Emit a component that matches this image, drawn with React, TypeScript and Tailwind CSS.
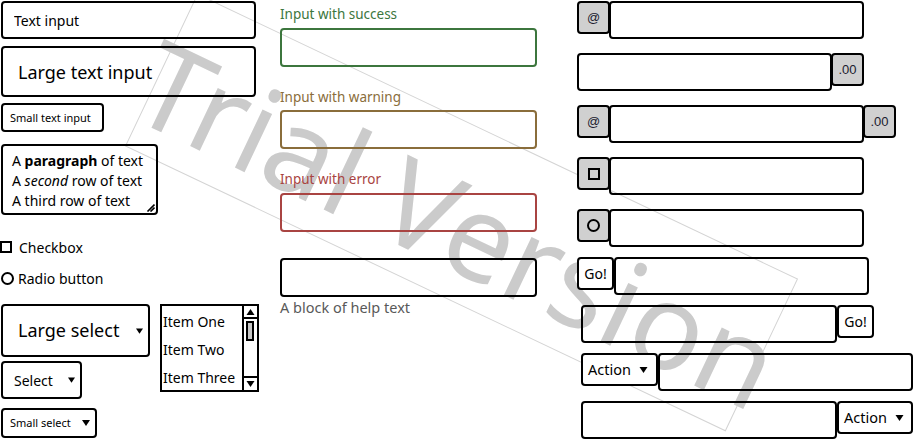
import React from "react";

const sans = { fontFamily: '"Noto Sans", "Segoe UI", sans-serif' };
const arial = { fontFamily: '"Liberation Sans", Arial, sans-serif' };

const Caret = ({ w = 8, h = 6 }: { w?: number; h?: number }) => (
  <svg width={w} height={h} viewBox="0 0 8 6" className="shrink-0">
    <path d="M0 0H8L4 6Z" fill="#000" />
  </svg>
);

const Addon = ({ children, right }: { children: React.ReactNode; right?: boolean }) => (
  <div
    className={
      "flex h-[33px] w-[33px] shrink-0 items-center justify-center rounded border-2 border-black bg-[#d0d0d0] text-[13px] text-[#1a1a2e] " +
      (right ? "-ml-px" : "-mr-px")
    }
    style={arial}
  >
    {children}
  </div>
);

const Field = ({ w = 255 }: { w?: number }) => (
  <input readOnly className="h-[38px] shrink-0 rounded border-2 border-black bg-transparent outline-none" style={{ width: w }} />
);

const GoButton = () => (
  <button className="flex h-[33px] w-[37px] shrink-0 items-center justify-center rounded border-2 border-black bg-white text-[14px]">
    Go!
  </button>
);

const ActionButton = ({ w }: { w: number }) => (
  <button
    className="flex h-[33px] shrink-0 items-center gap-[7px] rounded border-2 border-black bg-white pl-[5px] text-[14.5px]"
    style={{ width: w }}
  >
    Action
    <Caret w={11} h={6} />
  </button>
);

const SelectBox = ({
  label,
  cls,
  caret,
}: {
  label: string;
  cls: string;
  caret: number;
}) => (
  <div className={"flex items-center justify-between rounded border-2 border-black " + cls}>
    <span>{label}</span>
    <Caret w={caret} h={6} />
  </div>
);

const Watermark = () => (
  <div className="pointer-events-none absolute inset-0 -z-10 overflow-hidden">
    <div className="absolute left-[129px] top-[128px] flex h-[169px] w-[665px] rotate-[25.4deg] items-center justify-center overflow-visible border border-[#d4d4d4]">
      <span className="translate-x-[2px] translate-y-[10px] whitespace-nowrap text-[120px] leading-none text-[#cbcbcb]" style={sans}>
        Trial Version
      </span>
    </div>
  </div>
);

export default function App() {
  return (
    <div className="relative z-0 flex h-[440px] w-[915px] overflow-hidden bg-white text-black" style={sans}>
      <Watermark />

      {/* left column */}
      <div className="flex w-[280px] shrink-0 flex-col">
        <input
          readOnly
          value="Text input"
          className="ml-px mt-px h-[38px] w-[255px] rounded border-2 border-black bg-transparent pl-[11px] text-[14px] outline-none"
        />
        <input
          readOnly
          value="Large text input"
          className="ml-px mt-[7px] h-[51px] w-[255px] rounded border-2 border-black bg-transparent pl-[15px] text-[18px] outline-none"
        />
        <input
          readOnly
          value="Small text input"
          className="ml-px mt-[6px] h-[29px] w-[103px] rounded border-2 border-black bg-transparent pl-[7px] text-[11px] outline-none"
        />
        <div className="relative ml-px mt-[12px] h-[71px] w-[157px] rounded border-2 border-black pl-[9px] pt-[5px] text-[14px] leading-[20px]">
          <div>
            A <b>paragraph</b> of text
          </div>
          <div>
            A <i>second</i> row of text
          </div>
          <div>A third row of text</div>
          <svg width="9" height="9" viewBox="0 0 9 9" className="absolute bottom-px right-px">
            <path d="M8.5 1.5L1.5 8.5M8.5 4.5L4.5 8.5" stroke="#000" strokeWidth="1.6" />
          </svg>
        </div>
        <div className="mt-[22px] flex h-5 items-center gap-[7px] text-[14px]">
          <span className="h-3 w-3 border-2 border-black" />
          Checkbox
        </div>
        <div className="mt-[11px] flex h-5 items-center gap-[4px] pl-px text-[14px]">
          <span className="h-[13px] w-[13px] rounded-full border-2 border-black" />
          Radio button
        </div>
        <div className="mt-[16px] flex">
          <div className="flex flex-col">
            <SelectBox label="Large select" cls="ml-px h-[53px] w-[149px] pl-[15px] pr-[5px] text-[18px]" caret={7} />
            <SelectBox label="Select" cls="ml-px mt-[4px] h-[38px] w-[81px] pl-[11px] pr-[5px] text-[14px]" caret={7} />
            <SelectBox label="Small select" cls="ml-px mt-[9px] h-[30px] w-[96px] pl-[7px] pr-[5px] text-[11px]" caret={8} />
          </div>
          <div className="ml-[10px] flex h-[88px] w-[99px] border-2 border-black text-[14px]">
            <div className="flex-1 overflow-hidden pl-px pt-px">
              <div className="flex h-7 items-center">Item One</div>
              <div className="flex h-7 items-center">Item Two</div>
              <div className="flex h-7 items-center whitespace-nowrap">Item Three</div>
            </div>
            <div className="flex w-[15px] flex-col border-l-2 border-black">
              <div className="flex h-[13px] items-center justify-center border-b-2 border-black">
                <svg width="9" height="6" viewBox="0 0 8 6">
                  <path d="M0 6H8L4 0Z" fill="#000" />
                </svg>
              </div>
              <div className="flex-1">
                <div className="ml-[2px] mt-[2px] h-[20px] w-[8px] border-2 border-black bg-[#c8c8c8]" />
              </div>
              <div className="flex h-[14px] items-center justify-center border-t-2 border-black">
                <svg width="9" height="6" viewBox="0 0 8 6">
                  <path d="M0 0H8L4 6Z" fill="#000" />
                </svg>
              </div>
            </div>
          </div>
        </div>
      </div>

      {/* middle column */}
      <div className="flex w-[297px] shrink-0 flex-col">
        <div className="mt-[4px] flex h-5 items-center text-[13.5px] text-[#3c763d]">Input with success</div>
        <input readOnly className="mt-[4px] h-[39px] w-[257px] rounded border-2 border-[#3c763d] bg-transparent outline-none" />
        <div className="mt-[20px] flex h-5 items-center text-[13.5px] text-[#8a6d3b]">Input with warning</div>
        <input readOnly className="mt-[3px] h-[39px] w-[257px] rounded border-2 border-[#8a6d3b] bg-transparent outline-none" />
        <div className="mt-[20px] flex h-5 items-center text-[13.5px] text-[#a94442]">Input with error</div>
        <input readOnly className="mt-[4px] h-[39px] w-[257px] rounded border-2 border-[#a94442] bg-transparent outline-none" />
        <input readOnly className="mt-[26px] h-[39px] w-[257px] rounded border-2 border-black bg-transparent outline-none" />
        <div className="mt-px flex h-5 items-center text-[14.5px] text-[#595959]">A block of help text</div>
      </div>

      {/* right column */}
      <div className="flex flex-col">
        <div className="mt-px flex items-start">
          <Addon>@</Addon>
          <Field />
        </div>
        <div className="mt-[14px] flex items-start">
          <Field />
          <Addon right>.00</Addon>
        </div>
        <div className="mt-[14px] flex items-start">
          <Addon>@</Addon>
          <Field />
          <Addon right>.00</Addon>
        </div>
        <div className="mt-[14px] flex items-start">
          <Addon>
            <span className="h-3 w-3 border-2 border-black" />
          </Addon>
          <Field />
        </div>
        <div className="mt-[14px] flex items-start">
          <Addon>
            <span className="h-[13px] w-[13px] rounded-full border-2 border-black" />
          </Addon>
          <Field />
        </div>
        <div className="mt-[10px] flex items-start">
          <GoButton />
          <Field />
        </div>
        <div className="ml-[4px] mt-[10px] flex items-start">
          <Field w={256} />
          <GoButton />
        </div>
        <div className="ml-[4px] mt-[10px] flex items-start">
          <ActionButton w={77} />
          <Field />
        </div>
        <div className="ml-[4px] mt-[10px] flex items-start">
          <Field w={256} />
          <ActionButton w={76} />
        </div>
      </div>
    </div>
  );
}
